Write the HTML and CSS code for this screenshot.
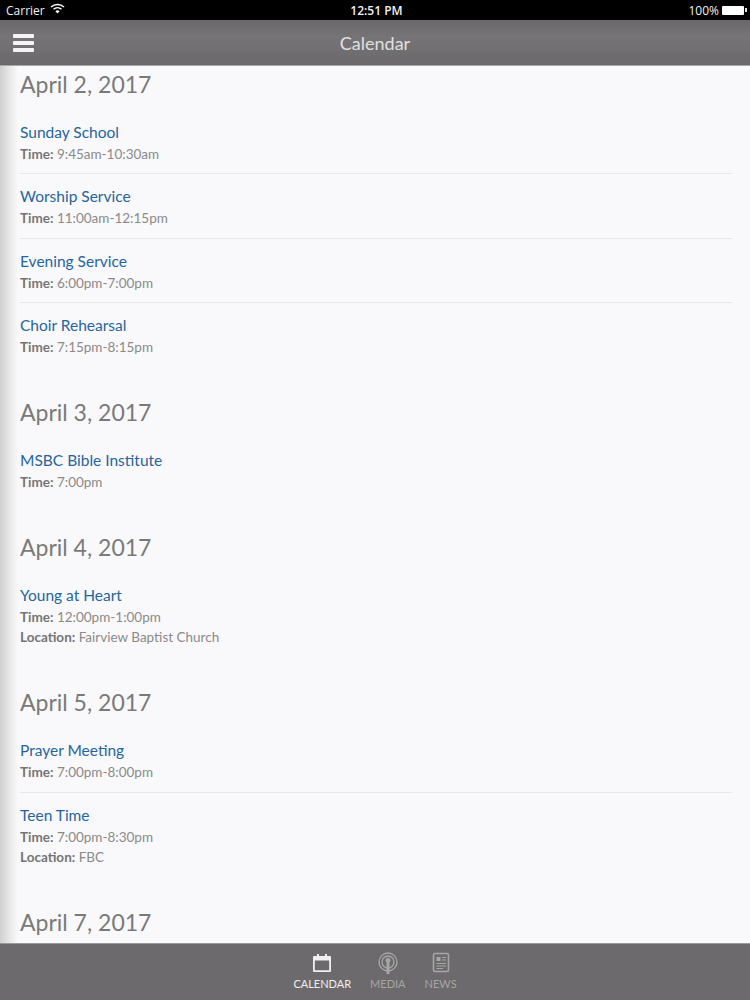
FILE: index.html
```html
<!DOCTYPE html>
<html lang="en">
<head>
    <meta charset="UTF-8">
    <meta name="viewport" content="width=device-width, initial-scale=1.0">
    <title>Calendar</title>
    <link rel="stylesheet" href="styles.css">
</head>
<body>
    <div class="status-bar">
        <div class="status-left">
            <span>Carrier</span>
            <svg class="wifi" width="15" height="11" viewBox="0 0 15 11">
                <path d="M1 4 A9.5 9.5 0 0 1 14 4" fill="none" stroke="#fff" stroke-width="1.5"/>
                <path d="M3.5 6.3 A6 6 0 0 1 11.5 6.3" fill="none" stroke="#fff" stroke-width="1.5"/>
                <path d="M7.5 10.5 L5.4 8.2 A3 3 0 0 1 9.6 8.2 Z" fill="#fff"/>
            </svg>
        </div>
        <div class="status-time">12:51 PM</div>
        <div class="status-right">
            <span>100%</span>
            <div class="battery"></div>
            <div class="battery-tip"></div>
        </div>
    </div>

    <header class="top-bar">
        <div class="menu-icon"><span></span><span></span><span></span></div>
        <h1>Calendar</h1>
    </header>

    <main class="content">
        <section class="day first">
            <h2>April 2, 2017</h2>
            <div class="event">
                <a href="#">Sunday School</a>
                <p><b>Time:</b> 9:45am-10:30am</p>
            </div>
            <div class="event">
                <a href="#">Worship Service</a>
                <p><b>Time:</b> 11:00am-12:15pm</p>
            </div>
            <div class="event">
                <a href="#">Evening Service</a>
                <p><b>Time:</b> 6:00pm-7:00pm</p>
            </div>
            <div class="event">
                <a href="#">Choir Rehearsal</a>
                <p><b>Time:</b> 7:15pm-8:15pm</p>
            </div>
        </section>
        <section class="day">
            <h2>April 3, 2017</h2>
            <div class="event">
                <a href="#">MSBC Bible Institute</a>
                <p><b>Time:</b> 7:00pm</p>
            </div>
        </section>
        <section class="day">
            <h2>April 4, 2017</h2>
            <div class="event">
                <a href="#">Young at Heart</a>
                <p><b>Time:</b> 12:00pm-1:00pm</p>
                <p><b>Location:</b> Fairview Baptist Church</p>
            </div>
        </section>
        <section class="day">
            <h2>April 5, 2017</h2>
            <div class="event">
                <a href="#">Prayer Meeting</a>
                <p><b>Time:</b> 7:00pm-8:00pm</p>
            </div>
            <div class="event">
                <a href="#">Teen Time</a>
                <p><b>Time:</b> 7:00pm-8:30pm</p>
                <p><b>Location:</b> FBC</p>
            </div>
        </section>
        <section class="day">
            <h2>April 7, 2017</h2>
        </section>
    </main>

    <nav class="tab-bar">
        <a href="#" class="tab active">
            <svg width="22" height="22" viewBox="0 0 22 22">
                <path fill-rule="evenodd" fill="currentColor" d="M3 4 H6 V2 H8 V4 H14 V2 H16 V4 H19 Q20 4 20 5 V19 Q20 20 19 20 H3 Q2 20 2 19 V5 Q2 4 3 4 Z M3.8 8.5 V18.2 H18.2 V8.5 Z"/>
            </svg>
            <span>CALENDAR</span>
        </a>
        <a href="#" class="tab">
            <svg width="22" height="22" viewBox="0 0 22 22" fill="none" stroke="currentColor">
                <circle cx="11" cy="10" r="9" stroke-width="1.3"/>
                <circle cx="11" cy="10" r="6" stroke-width="1.3"/>
                <circle cx="11" cy="8.5" r="2.4" fill="currentColor" stroke="none"/>
                <path d="M11 11 V21" stroke-width="3" stroke-linecap="round"/>
            </svg>
            <span>MEDIA</span>
        </a>
        <a href="#" class="tab">
            <svg width="22" height="22" viewBox="0 0 22 22" fill="none" stroke="currentColor">
                <rect x="3.5" y="1.5" width="15" height="18" rx="1.5" stroke-width="1.6"/>
                <rect x="6.5" y="5" width="4" height="4" fill="currentColor" stroke="none"/>
                <path d="M12 5.5 H16 M12 8 H16 M6.5 11.5 H16 M6.5 14 H16 M6.5 16.5 H13" stroke-width="1.2"/>
            </svg>
            <span>NEWS</span>
        </a>
    </nav>
</body>
</html>
```

FILE: styles.css
```css
html, body {
    height: 100%;
}
body {
    font-family: Lato, "Open Sans", sans-serif;
    margin: 0;
    height: 1000px;
    overflow: hidden;
    display: flex;
    flex-direction: column;
    background-color: #F9F9FB;
}
.status-bar {
    height: 20px;
    flex-shrink: 0;
    background-color: #000;
    color: #F2F2F2;
    font-family: "Open Sans", sans-serif;
    font-size: 12px;
    display: grid;
    grid-template-columns: 1fr auto 1fr;
    align-items: center;
    padding: 0 3px 0 6px;
}
.status-left {
    display: flex;
    align-items: center;
    gap: 5px;
}
.wifi {
    margin-top: -3px;
}
.status-time {
    font-weight: 600;
    font-size: 12px;
}
.status-right {
    display: flex;
    align-items: center;
    justify-content: flex-end;
}
.status-right span {
    margin-right: 3px;
}
.battery {
    width: 22px;
    height: 9px;
    background-color: #fff;
    border-radius: 1px;
}
.battery-tip {
    width: 2px;
    height: 4px;
    margin-left: 1px;
    background-color: #ddd;
}
.top-bar {
    height: 46px;
    flex-shrink: 0;
    box-sizing: border-box;
    border-bottom: 1px solid #A8A8A8;
    background: linear-gradient(#6B696B, #767476 40%, #6A686A);
    display: flex;
    align-items: center;
    justify-content: center;
    position: relative;
}
.top-bar h1 {
    margin: 0;
    font-size: 18px;
    font-weight: 400;
    color: #E0E0E0;
}
.menu-icon {
    position: absolute;
    left: 13px;
    top: 14px;
    width: 21px;
    display: flex;
    flex-direction: column;
    gap: 3.5px;
}
.menu-icon span {
    height: 3.5px;
    border-radius: 1px;
    background-color: #F4F4F4;
}
.content {
    flex: 1;
    min-height: 0;
    overflow: hidden;
    padding: 0 18px 0 20px;
    background: linear-gradient(to right, #CFCFCF, #E6E6E6 9px, #F9F9FB 18px);
}
.day {
    padding-top: 30.9px;
}
.day.first {
    padding-top: 3px;
}
.day h2 {
    margin: 0 0 11px;
    font-size: 23px;
    line-height: 30px;
    font-weight: 400;
    color: #7A7A7A;
}
.event {
    padding: 11px 0 9.3px;
    border-bottom: 1px solid #E6E6E8;
}
.event:last-child {
    border-bottom: none;
}
.event a {
    display: block;
    font-size: 15.5px;
    line-height: 22px;
    color: #26659C;
    text-decoration: none;
}
.event p {
    margin: 0;
    font-size: 13.5px;
    line-height: 20px;
    color: #8A8A8A;
}
.event a + p {
    margin-top: 1px;
}
.event p b {
    color: #757575;
}
.tab-bar {
    height: 57px;
    flex-shrink: 0;
    box-sizing: border-box;
    border-top: 1px solid #999;
    background-color: #6C6A6C;
    display: flex;
    justify-content: center;
    gap: 19px;
    padding-top: 8px;
}
.tab {
    display: flex;
    flex-direction: column;
    align-items: center;
    gap: 3px;
    color: #A6A6A6;
    font-size: 11px;
    text-decoration: none;
}
.tab.active {
    color: #F0F0F0;
}
```
